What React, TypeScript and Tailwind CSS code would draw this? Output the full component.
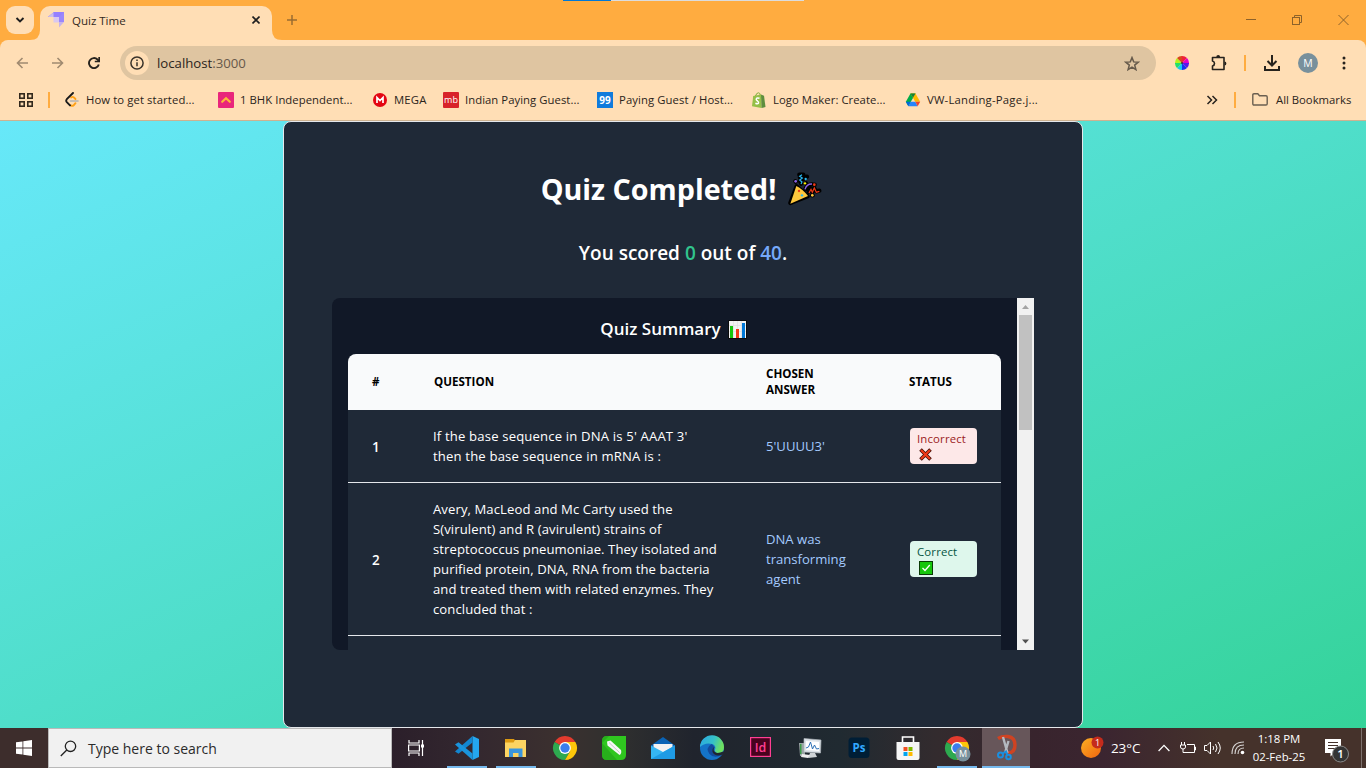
import React from "react";

type Kids = { children?: React.ReactNode };

/* ---------- emoji style drawings ---------- */

const Popper = () => (
  <svg className="ml-[11px] size-9 shrink-0" viewBox="801 65 108 108">
    <g stroke="#000" strokeWidth="13" strokeLinejoin="round" strokeLinecap="round" fill="#000">
      <path d="M811 161 830 111 863 141Z" />
      <path d="M838 76l12 0-10 8 9 6-9 5 4 8M850 84l11-2M826 96l1 1M858 102l1 1" fill="none" />
      <path d="M856 120q6-16 22-15M866 127l6-9 5 10 6-11 6 9 9-2M876 138l2 0M883 106l1 0" fill="none" />
    </g>
    <path d="M811 163 829 110q19 9 35 30Z" fill="#ffc83d" />
    <path d="M846 76l-7 5 8 5-8 6 7 6-3 6" fill="none" stroke="#28b8f2" strokeWidth="3.5" />
    <path d="M867 131l6-11 4 9 6-13 6 13 9-3" fill="none" stroke="#f03a17" strokeWidth="3.5" />
    <path d="M855 120q5-17 21-16" fill="none" stroke="#8a63e8" strokeWidth="4" />
    <circle cx="827" cy="96" r="4" fill="#8a63e8" />
    <circle cx="857" cy="89" r="3.5" fill="#28b8f2" />
    <circle cx="855" cy="102" r="3.5" fill="#fff100" />
    <circle cx="883" cy="106" r="4" fill="#f03a17" />
    <circle cx="877" cy="138" r="4" fill="#ffc83d" />
    <circle cx="837" cy="125" r="3.5" fill="#f03a17" />
    <circle cx="846" cy="138" r="3.5" fill="#28b8f2" />
  </svg>
);

const Chart = () => (
  <svg className="ml-[7px] size-[19px] shrink-0" viewBox="0 0 19 19">
    <rect width="19" height="19" rx="1" fill="#0b0b0b" />
    <rect x="1" y="1" width="17" height="17" fill="#f2f2f2" />
    <path d="M5.500 1v17M9.500 1v17M13.500 1v17M1 5.500h17M1 11.500h17" stroke="#dcdcdc" strokeWidth=".6" />
    <rect x="2" y="6" width="3" height="12" fill="#16c60c" />
    <rect x="8" y="9" width="3" height="9" fill="#f03a17" />
    <rect x="14" y="3" width="3" height="15" fill="#0078d7" />
  </svg>
);

const Cross = () => (
  <svg className="ml-[2px] size-[13px]" viewBox="0 0 13 13">
    <path d="M1.500 1.500 11.500 11.500M11.500 1.500 1.500 11.500" stroke="#3b0d05" strokeWidth="3.600" />
    <path d="M2 2 11 11M11 2 2 11" stroke="#f03a17" strokeWidth="2.200" />
  </svg>
);

const Check = () => (
  <svg className="mt-px ml-[2px] size-[14px]" viewBox="0 0 14 14">
    <rect width="14" height="14" fill="#0a3d06" />
    <rect x="1" y="1" width="12" height="12" fill="#16c60c" />
    <path d="M3.500 7 6 9.500 10.800 4" fill="none" stroke="#fff" strokeWidth="1.300" />
  </svg>
);

/* ---------- browser chrome ---------- */

function TabStrip() {
  return (
    <div className="relative flex h-10 shrink-0 items-start bg-[#ffac40]">
      <div className="absolute top-0 left-[563px] flex h-px w-[241px] bg-[#dcdcdc]">
        <div className="w-12 bg-[#0078d7]" />
      </div>
      <div className="mt-1.5 ml-1.5 flex size-7 items-center justify-center rounded-[9px] bg-[#ffdeb5]">
        <svg width="10" height="8" viewBox="0 0 10 8">
          <path d="M1.500 2 5 5.500 8.500 2" fill="none" stroke="#1f1f1f" strokeWidth="1.900" />
        </svg>
      </div>
      <div className="relative mt-1.5 ml-1.5 flex h-[34px] w-[232px] rounded-t-[10px] bg-[#ffdeb5]">
        <svg className="absolute bottom-0 -left-2.5" width="10" height="10">
          <path d="M10 0v10H0Q10 10 10 0Z" fill="#ffdeb5" />
        </svg>
        <svg className="absolute -right-2.5 bottom-0" width="10" height="10">
          <path d="M0 0v10h10Q0 10 0 0Z" fill="#ffdeb5" />
        </svg>
        <svg className="mt-1.5 ml-2 size-4" viewBox="0 0 16 16">
          <path d="M6 0h10v10h-5V5H0Z" fill="#9b87fb" />
          <path d="M6 0h10L11 5H0Z" fill="#9580ff" />
          <path d="M0 5 5.500.500V5Z" fill="#cdbfe8" />
          <rect x="5.500" y="5" width="5.500" height="5.500" fill="#d9c8f0" />
          <path d="M11 10h5l-5 5.500Z" fill="#c7b3ea" />
        </svg>
        <span className="mt-[7px] ml-2 text-[11.5px] leading-4 text-[#33291d]">Quiz Time</span>
        <svg className="mt-[10px] mr-3 ml-auto" width="8" height="8">
          <path d="M.5.5l7 7M7.500.5l-7 7" stroke="#1f1f1f" strokeWidth="1.600" />
        </svg>
      </div>
      <svg className="mt-[15px] ml-[15px]" width="10" height="10">
        <path d="M5 0v10M0 5h10" stroke="#9a6c30" strokeWidth="1.500" />
      </svg>
      <div className="mt-[14px] mr-[17px] ml-auto flex gap-[36px] text-[#8d622a]">
        <svg width="10" height="12"><path d="M0 5.500h10" stroke="currentColor" /></svg>
        <svg width="10" height="12" fill="none" stroke="currentColor">
          <rect x=".5" y="3.500" width="7" height="7" />
          <path d="M2.500 3.500v-2h7v7h-2" />
        </svg>
        <svg width="11" height="12"><path d="M.5 1l10 10M10.500 1l-10 10" stroke="currentColor" /></svg>
      </div>
    </div>
  );
}

function Toolbar() {
  return (
    <div className="bg-[#ffac40]">
      <div className="flex h-[46px] items-center rounded-t-lg bg-[#ffdeb5]">
        <svg className="ml-4" width="12" height="12" fill="none" stroke="#a08a70" strokeWidth="1.600">
          <path d="M12 6H1.500M6.500 1l-5 5 5 5" />
        </svg>
        <svg className="ml-6" width="12" height="12" fill="none" stroke="#a08a70" strokeWidth="1.600">
          <path d="M0 6h10.500M5.500 1l5 5-5 5" />
        </svg>
        <svg className="ml-6" width="12" height="14" fill="none" stroke="#26221d" strokeWidth="1.900">
          <path d="M10.800 8.500A5 5 0 1 1 9.500 3.500L11 5" />
          <path d="M11.200 1v4.500H6.800" strokeWidth="1.700" />
        </svg>
        <div className="ml-5 flex h-[34px] w-[1036px] items-center rounded-full bg-[#dfc5a1]">
          <div className="ml-[5px] flex size-6 items-center justify-center rounded-full bg-[#ffdeb5]">
            <svg width="14" height="14" fill="none" stroke="#3a332b" strokeWidth="1.500">
              <circle cx="7" cy="7" r="6.100" />
              <path d="M7 6.200v4M7 3.500v1.500" />
            </svg>
          </div>
          <span className="ml-2 text-[13.2px] leading-5 text-[#2b241b]">
            localhost<span className="text-[#67594a]">:3000</span>
          </span>
          <svg className="mr-4 ml-auto" width="16" height="15" viewBox="0 0 16 15" fill="none" stroke="#665a4b" strokeWidth="1.500">
            <path d="M8 1.600 9.700 5.900l4.500.3-3.500 2.900 1.200 4.500L8 11.100l-3.900 2.500 1.200-4.500L1.800 6.200l4.500-.3Z" />
          </svg>
        </div>
        <svg className="ml-[19px]" width="14" height="14" viewBox="-7 -7 14 14">
          <path d="M0 0V-7A7 7 0 0 1 5-5Z" fill="#f0203a" />
          <path d="M0 0 5-5A7 7 0 0 1 7 0Z" fill="#e000c8" />
          <path d="M0 0H7A7 7 0 0 1 5 5Z" fill="#5a16e8" />
          <path d="M0 0 5 5A7 7 0 0 1 0 7Z" fill="#1730f2" />
          <path d="M0 0V7A7 7 0 0 1-5 5Z" fill="#16c8ee" />
          <path d="M0 0-5 5A7 7 0 0 1-7 0Z" fill="#22e06a" />
          <path d="M0 0H-7A7 7 0 0 1-5-5Z" fill="#b6f01c" />
          <path d="M0 0-5-5A7 7 0 0 1 0-7Z" fill="#d8471c" />
          <circle r="1" fill="#333" />
        </svg>
        <svg className="-mt-px ml-[21px]" width="18" height="18" viewBox="0 0 18 18">
          <path d="M2.500 3.500h11.500v12H2.500v-3.500q2-.5 2-2.500t-2-2.500Z" fill="none" stroke="#26221d" strokeWidth="1.600" strokeLinejoin="round" />
          <path d="M6.300 3a1.900 1.900 0 0 1 3.800 0ZM14.500 7.600a1.900 1.900 0 0 1 0 3.800Z" fill="#26221d" />
        </svg>
        <div className="ml-[16px] h-4 w-0.5 bg-[#ffac40]" />
        <svg className="ml-[18px]" width="16" height="16" fill="none" stroke="#26221d" strokeWidth="2">
          <path d="M8 0v10M3.500 6 8 10.500 12.500 6M1 11v4h14v-4" />
        </svg>
        <div className="ml-[18px] flex size-5 items-center justify-center rounded-full bg-[#78909c] pt-px text-[10.5px] text-white">M</div>
        <svg className="ml-[24px]" width="4" height="14" fill="#26221d">
          <circle cx="2" cy="2" r="1.500" /><circle cx="2" cy="7" r="1.500" /><circle cx="2" cy="12" r="1.500" />
        </svg>
      </div>
    </div>
  );
}

const icons: Record<string, React.ReactNode> = {
  leet: (
    <svg width="16" height="16" viewBox="0 0 16 16" fill="none" strokeLinecap="round">
      <path d="M11.500 11.200 9.700 13.200q-1.500 1.300-3 0" stroke="#ffa116" strokeWidth="1.900" />
      <path d="M7 5.500q1.500-1.200 3 0l1.500 1.500" stroke="#ffa116" strokeWidth="1.800" />
      <path d="M9 1 2.800 7.200q-1.200 1.600 0 3L6 13.400" stroke="#1a1a1a" strokeWidth="1.900" />
      <path d="M6.500 9h7.500" stroke="#b3b3b3" strokeWidth="1.600" />
    </svg>
  ),
  bhk: (
    <svg width="16" height="16">
      <rect width="16" height="16" rx="1" fill="#e9267b" />
      <path d="M4.200 9.800 8 6.200l3.800 3.600" fill="none" stroke="#fcb83a" strokeWidth="2.200" strokeLinecap="round" />
    </svg>
  ),
  mega: (
    <svg width="16" height="16">
      <circle cx="8" cy="8" r="7" fill="#e30613" />
      <path d="M5 11V5.500L8 8.500l3-3V11" fill="none" stroke="#fff" strokeWidth="1.700" />
    </svg>
  ),
  mb: <span className="flex size-4 items-center justify-center rounded-[1px] bg-[#d8232a] text-[9px] leading-4 text-white">mb</span>,
  nn: <span className="flex size-4 items-center justify-center bg-[#0f7bdc] text-[10px] leading-4 font-bold text-white">99</span>,
  shop: (
    <svg width="16" height="16" viewBox="0 0 16 16">
      <path d="M2.200 4 10 2.500l.5 13.500L1 14.300Z" fill="#95bf47" />
      <path d="M10 2.500l3 1.200 1.500 11.300-4 1Z" fill="#5e8e3e" />
      <path d="M4.500 4Q5.500.700 7.500.800q1.700.2 1.700 2.200" fill="none" stroke="#7fae3b" />
      <path d="M8.500 6.300q-3-1-3.300 1 0 1 1.400 1.700 1.500 1 .8 2.300-.8 1-3 0" fill="none" stroke="#fff" strokeWidth="1.500" />
    </svg>
  ),
  drive: (
    <svg width="16" height="16" viewBox="0 0 16 16">
      <path d="M5.500 1.500h5L8 6 3.300 14 .8 9.800Z" fill="#00ac47" />
      <path d="M10.500 1.500 15.200 9.800h-5L5.500 1.500h5L8 5.800Z" fill="#ffba00" />
      <path d="M5.500 1.500 8 5.800l2.500-4.300Z" fill="#188038" />
      <path d="M5.700 9.800h4.600l2.400 4.500H3.300Z" fill="#2684fc" />
      <path d="M.8 9.800h4.900l-2.400 4.500Z" fill="#0066da" />
      <path d="M10.300 9.800h4.900l-2.500 4.500Z" fill="#ea4335" />
    </svg>
  ),
};

const bookmarks = [
  { icon: "leet", label: "How to get started...", w: "w-[154px] tracking-[0.1px]" },
  { icon: "bhk", label: "1 BHK Independent...", w: "w-[154px] tracking-[0.05px]" },
  { icon: "mega", label: "MEGA", w: "w-[71px] tracking-[0.2px]" },
  { icon: "mb", label: "Indian Paying Guest...", w: "w-[154px] tracking-[0.05px]" },
  { icon: "nn", label: "Paying Guest / Host...", w: "w-[154px] tracking-[0.1px]" },
  { icon: "shop", label: "Logo Maker: Create...", w: "w-[154px] tracking-[0.05px]" },
  { icon: "drive", label: "VW-Landing-Page.j...", w: "w-[140px] tracking-[0.22px]" },
];

function Bookmarks() {
  return (
    <div className="flex h-[35px] items-center border-b border-[#cdb291] bg-[#ffdeb5] pb-[7px] text-[11.3px] text-[#2b241b]">
      <svg className="ml-[19px] mt-[1px]" width="14" height="14" fill="none" stroke="#33291d" strokeWidth="1.600">
        <rect x=".8" y=".8" width="4.400" height="4.400" /><rect x="8.800" y=".8" width="4.400" height="4.400" />
        <rect x=".8" y="8.800" width="4.400" height="4.400" /><rect x="8.800" y="8.800" width="4.400" height="4.400" />
      </svg>
      <div className="ml-[15px] h-4 w-0.5 bg-[#ffac40]" />
      <div className="ml-[14px] flex">
        {bookmarks.map((b) => (
          <div key={b.label} className={`flex items-center gap-1.5 whitespace-nowrap ${b.w}`}>
            {icons[b.icon]}
            <span className="pt-px">{b.label}</span>
          </div>
        ))}
      </div>
      <svg className="ml-auto" width="12" height="10" fill="none" stroke="#26221d" strokeWidth="1.500">
        <path d="M1.500 1l4 4-4 4M6.500 1l4 4-4 4" />
      </svg>
      <div className="ml-4 h-4 w-0.5 bg-[#ffac40]" />
      <svg className="ml-4" width="16" height="13" fill="none" stroke="#6b5f50" strokeWidth="1.400">
        <path d="M.8 2q0-1.200 1.200-1.200h3.800l1.700 2H14q1.200 0 1.200 1.200v6.800q0 1.200-1.200 1.200H2q-1.200 0-1.200-1.200Z" />
      </svg>
      <span className="mr-[14px] ml-2 w-[76px] pt-px whitespace-nowrap">All Bookmarks</span>
    </div>
  );
}

/* ---------- quiz page ---------- */

const rows = [
  {
    lines: ["If the base sequence in DNA is 5' AAAT 3'", "then the base sequence in mRNA is :"],
    answer: ["5'UUUU3'"],
    ok: false,
    h: "h-[73px]",
    track: "tracking-[0.17px]",
  },
  {
    lines: [
      "Avery, MacLeod and Mc Carty used the",
      "S(virulent) and R (avirulent) strains of",
      "streptococcus pneumoniae. They isolated and",
      "purified protein, DNA, RNA from the bacteria",
      "and treated them with related enzymes. They",
      "concluded that :",
    ],
    answer: ["DNA was", "transforming", "agent"],
    ok: true,
    h: "h-[153px]",
    track: "tracking-[0.09px]",
  },
];

const Lines = ({ items }: { items: string[] }) => (
  <div className="leading-5 whitespace-nowrap">
    {items.map((t) => (
      <div key={t}>{t}</div>
    ))}
  </div>
);

const Cell = ({ children }: Kids) => <div className="pl-6">{children}</div>;

function Summary() {
  return (
    <div className="flex h-[352px] w-[702px] shrink-0 overflow-hidden rounded-l-lg bg-[#111827]">
      <div className="flex flex-1 flex-col px-4 pt-4">
        <h3 className="mb-3 flex h-7 shrink-0 items-center justify-center pt-0.5 pr-0.5 text-[17px] font-semibold">
          Quiz Summary
          <Chart />
        </h3>
        <div className="flex-1 overflow-hidden rounded-t-lg bg-[#1f2937] text-[13.1px]">
          <div className="grid h-14 grid-cols-[61px_333px_143px_116px] items-center bg-[#f9fafb] text-[11.6px] leading-4 font-bold text-black">
            <Cell>#</Cell>
            <Cell><span className="pl-px">QUESTION</span></Cell>
            <Cell>CHOSEN<br />ANSWER</Cell>
            <Cell>STATUS</Cell>
          </div>
          {rows.map((r, i) => (
            <div key={i} className={`grid grid-cols-[61px_333px_143px_116px] items-center border-b border-[#e5e7eb] ${r.h}`}>
              <Cell><div className="pt-px text-[13.5px] leading-5 font-semibold">{i + 1}</div></Cell>
              <Cell><div className={r.track}><Lines items={r.lines} /></div></Cell>
              <Cell><div className="text-[#a4cafe]"><Lines items={r.answer} /></div></Cell>
              <div className={`ml-[25px] h-9 w-[67px] rounded pt-[3px] pl-[7px] text-[11.4px] leading-4 font-medium tracking-[0.15px] ${r.ok ? "bg-[#def7ec] text-[#03543f]" : "bg-[#fde8e8] text-[#9b1c1c]"}`}>
                {r.ok ? "Correct" : "Incorrect"}
                {r.ok ? <Check /> : <div className="pt-px"><Cross /></div>}
              </div>
            </div>
          ))}
        </div>
      </div>
      <div className="flex w-[17px] flex-col items-center justify-between bg-[#f1f1f1]">
        <div className="flex h-[132px] flex-col items-center">
          <svg className="h-[17px] w-[17px] shrink-0" viewBox="0 0 17 17"><path d="M5 11 8.500 7 12 11Z" fill="#a3a3a3" /></svg>
          <div className="w-[13px] flex-1 bg-[#c1c1c1]" />
        </div>
        <svg width="17" height="17" viewBox="0 0 17 17"><path d="M5 6.500h7L8.500 10.500Z" fill="#505050" /></svg>
      </div>
    </div>
  );
}

function Page() {
  return (
    <div className="flex h-[607px] shrink-0 justify-center bg-linear-to-br from-[#67e8f9] to-[#34d399]">
      <div className="flex h-[607px] w-[800px] flex-col items-center rounded-lg border border-[#e5e7eb] bg-[#1f2937] pt-[49px] text-white">
        <h1 className="-ml-0.5 flex h-9 items-center text-[28.7px] font-bold whitespace-nowrap">
          Quiz Completed!
          <Popper />
        </h1>
        <p className="mt-8 mb-[31px] h-7 text-[19px] leading-7 font-semibold whitespace-nowrap">
          You scored <span className="text-[#31c48d]">0</span> out of <span className="text-[#76a9fa]">40</span>.
        </p>
        <Summary />
      </div>
    </div>
  );
}

/* ---------- taskbar ---------- */

const ChromeLogo = () => (
  <>
    <path d="M12 12 1.600 6A12 12 0 0 1 22.400 6H12Z" fill="#e33b2e" />
    <path d="M12 12 1.600 6A12 12 0 0 0 12 24l5.200-9Z" fill="#2da94f" />
    <path d="M12 12V6h10.400A12 12 0 0 1 12 24l5.200-9Z" fill="#fdc60a" />
    <circle cx="12" cy="12" r="5.900" fill="#fff" />
    <circle cx="12" cy="12" r="4.700" fill="#3b7ded" />
  </>
);

const TaskIcon = ({ children, line, active }: Kids & { line?: boolean; active?: boolean }) => (
  <div className={`flex w-12 flex-col items-center pt-2 ${active ? "bg-[#67565a]" : ""}`}>
    <svg width="24" height="24" viewBox="0 0 24 24" overflow="visible" className="shrink-0">{children}</svg>
    {line && <div className={`mt-auto h-0.5 bg-[#76b9ed] ${active ? "w-12" : "w-10"}`} />}
  </div>
);

function Taskbar() {
  return (
    <div className="flex h-10 shrink-0 bg-[#3d2d2c] text-white">
      <div className="flex w-12 items-center justify-center">
        <svg width="16" height="16" fill="#fff">
          <path d="M0 2.300 6.500 1.400V7.500H0ZM7.300 1.300 16 0V7.500H7.300ZM0 8.400H6.500V14.600L0 13.700ZM7.300 8.400H16V16L7.300 14.800Z" />
        </svg>
      </div>
      <div className="flex w-[344px] items-center border border-[#b9b9b9] bg-[#f1f1f1] text-[14px] text-[#2b2b2b]">
        <svg className="ml-[11px]" width="17" height="17" fill="none" stroke="#222" strokeWidth="1.300">
          <circle cx="10.500" cy="6.300" r="5.200" /><path d="M6.800 10 .8 16" />
        </svg>
        <span className="ml-[11px]">Type here to search</span>
      </div>
      <div className="flex flex-1 bg-[linear-gradient(90deg,#2b1f2a_0%,#33272f_8%,#3b302f_17%,#30302f_23%,#20242d_31%,#202a31_46%,#332b2e_56%,#38242d_66%,#3b2530_73%,#45322b_85%,#45322b_100%)]">
        <div className="mr-[3px] flex w-12 items-center justify-center">
          <svg width="17" height="16" fill="none" stroke="#fff" strokeWidth="1.200">
            <path d="M1 0v3h10V0M1 16v-3h10v3M.6 5h10.800v6H.6ZM14.500 0v16" />
            <rect x="13" y="4.500" width="3" height="3" fill="#fff" stroke="none" />
          </svg>
        </div>
        <div className="flex gap-px">
          <TaskIcon line>
            <path d="M17.500 0 24 3V21L17.500 24Z" fill="#24a6ee" />
            <path d="M17.500 0V6.500L3.500 17.800 0 15.500Z" fill="#1286d0" />
            <path d="M0 8.500 3.500 6.200 17.500 17.500V24Z" fill="#1a94dc" />
          </TaskIcon>
          <TaskIcon line>
            <path d="M1 3h9l1.500 2H22v6H1Z" fill="#dd9a11" />
            <path d="M1 6.500h8.500L11 4h11v17H1Z" fill="#fcd462" />
            <path d="M5 21v-8.500h13.500V21h-4v-4h-5.500v4Z" fill="#3a96dd" />
          </TaskIcon>
          <TaskIcon><ChromeLogo /></TaskIcon>
          <TaskIcon>
            <path d="M5 0h19v19q0 5-5 5H5q-5 0-5-5V5q0-5 5-5Z" fill="#2fc61f" />
            <path d="M0 7 7 0v0H5Q0 0 0 5V19q0 5 5 5H15Z" fill="#23a51a" opacity=".7" />
            <path d="M5 5.500 8.500 4.500 19 14q1 3.500-1.500 5L5.500 9.500Z" fill="#f7f7f7" />
            <path d="M7 6.500 17.500 16.500" stroke="#c8c8c8" strokeWidth="1" />
          </TaskIcon>
          <TaskIcon>
            <path d="M0 9.500 12 1 24 9.500V12H0Z" fill="#0a63b5" />
            <path d="M2.500 8H21.500v8H2.500Z" fill="#f2f2f2" />
            <path d="M0 9.500 12 16 24 9.500V23H0Z" fill="#35b5f2" />
            <path d="M24 9.500V23H0Z" fill="#1f9be4" />
          </TaskIcon>
          <TaskIcon>
            <defs>
              <linearGradient id="edge" x1="0" y1="0" x2="1" y2=".3">
                <stop offset="0" stopColor="#2aa6e4" /><stop offset=".6" stopColor="#35c1c8" /><stop offset="1" stopColor="#6ee060" />
              </linearGradient>
            </defs>
            <circle cx="12" cy="12" r="12" fill="#1473c8" />
            <path d="M0 11A12 12 0 0 1 24 11.500q0 5.500-6 5.500-4 0-3.500-2.500 2.500-4.500-2-6.500Q5 6 0 11Z" fill="url(#edge)" />
            <path d="M11.500 8Q5 12 9.500 18q4.500 5 12.500 1-5-.5-7-3.500-2-2.500-.5-4-1-2.500-3-3.500Z" fill="#124a9c" />
            <path d="M14.500 11q-2 2.500 0 5 3 2 9-.5l.5 1.500-2.500 2q-7 1.500-9-3-.5-4 2-5Z" fill="#20262f" />
          </TaskIcon>
          <TaskIcon>
            <rect x="1.600" y="1.600" width="19.800" height="18.800" fill="#49021f" stroke="#ff3f93" strokeWidth="1.200" />
            <text x="11.500" y="15.800" textAnchor="middle" fontSize="12.500" fontWeight="600" fill="#ff3f93" fontFamily="Open Sans">Id</text>
          </TaskIcon>
          <TaskIcon>
            <path d="M1 7h6v13H2Z" fill="#9ba5a5" />
            <path d="M2 8h1.500v10H2Z" fill="#3a9d49" />
            <path d="M6 2.500 23 4l-.5 13L6 16Z" fill="#dfe5ea" stroke="#aab2b8" strokeWidth=".7" />
            <path d="M8 5 21 6v9L8 14Z" fill="#fff" />
            <path d="M8 12l2.500-1 2-5 2 7 2-4 2 4 2.500-.5" fill="none" stroke="#2b6fb5" />
            <path d="M12 17h5l2 4-9 1Z" fill="#cfd4d7" /><path d="M4 18l8 1-2 3-7-1Z" fill="#eee" />
          </TaskIcon>
          <TaskIcon>
            <rect x="1.500" y="1.500" width="21" height="20.500" rx="3.500" fill="#001e36" />
            <text x="12" y="16" textAnchor="middle" fontSize="11.500" fontWeight="700" fill="#31a8ff" fontFamily="Open Sans">Ps</text>
          </TaskIcon>
          <TaskIcon>
            <path d="M6.500 7V1h11v6" fill="none" stroke="#fff" strokeWidth="1.600" />
            <path d="M.5 6h23v16q0 2-2 2h-19q-2 0-2-2Z" fill="#f6f6f6" />
            <rect x="7.500" y="11" width="4" height="4" fill="#f25022" /><rect x="12.500" y="11" width="4" height="4" fill="#7fba00" />
            <rect x="7.500" y="16" width="4" height="4" fill="#00a4ef" /><rect x="12.500" y="16" width="4" height="4" fill="#ffb900" />
          </TaskIcon>
          <TaskIcon line>
            <ChromeLogo />
            <circle cx="18" cy="18" r="7.500" fill="#78909c" />
            <text x="18" y="21.300" textAnchor="middle" fontSize="9" fill="#fff" fontFamily="Open Sans">M</text>
          </TaskIcon>
          <TaskIcon line active>
            <path d="M4 2.500Q8 0 14 .5q7 1 7 8.500 0 7-6 8-2 0-3-2" fill="none" stroke="#cf4322" strokeWidth="3.400" />
            <path d="M9 1 13.500 17M14.500 5 11 17" stroke="#b3b8bf" strokeWidth="2.400" />
            <circle cx="6.500" cy="19" r="2.500" fill="none" stroke="#1a8fe0" strokeWidth="2" />
            <circle cx="14.500" cy="21" r="2.300" fill="none" stroke="#1a8fe0" strokeWidth="2" />
            <path d="M8.500 17.500 12 15.500l1.500 3.500" fill="none" stroke="#1a8fe0" strokeWidth="2" />
          </TaskIcon>
        </div>
        <div className="ml-[50px] flex flex-1 items-center">
          <svg width="24" height="24" viewBox="0 0 24 24">
            <defs><linearGradient id="sun" x1="0" y1="0" x2="1" y2="1"><stop offset="0" stopColor="#fbb024" /><stop offset="1" stopColor="#f0640f" /></linearGradient></defs>
            <circle cx="11" cy="12" r="10" fill="url(#sun)" />
            <circle cx="17.500" cy="6.500" r="6" fill="#c42b1c" />
            <text x="17.500" y="9.700" textAnchor="middle" fontSize="9" fill="#fff" fontFamily="Open Sans">1</text>
          </svg>
          <span className="ml-[7px] w-[30px] text-[13.5px] tracking-[-0.1px] whitespace-nowrap">23°C</span>
          <svg className="ml-[17px]" width="12" height="8" fill="none" stroke="#fff" strokeWidth="1.300"><path d="M.6 7 6 1.400 11.400 7" /></svg>
          <svg className="ml-[10px]" width="16" height="13" fill="none" stroke="#fff">
            <path d="M7 2.500h7.500v8h-9M14.500 5h1v3h-1M1.500 0v3M4.500 0v3M.5 3h5v2q0 2-2.500 2T.5 5ZM3 7v3.500h3" />
          </svg>
          <svg className="ml-2" width="17" height="14" fill="none" stroke="#fff">
            <path d="M.5 4.500h2.500L6.500 1v12L3 9.500H.5ZM9 5q1.500 2 0 4M11.500 3q3 4 0 8M14 1q4.500 6 0 12" />
          </svg>
          <svg className="ml-[10px]" width="14" height="14" fill="none" stroke="#eee" strokeWidth="1.100">
            <path d="M1 13Q1 1 13 1M4 13q0-9 9-9M7 13q0-6 6-6" opacity=".85" /><circle cx="11.500" cy="11.500" r="1.800" fill="#fff" stroke="none" />
          </svg>
          <div className="ml-[6px] flex w-[56px] flex-col items-center text-[11.4px] leading-[18px] whitespace-nowrap">
            <span>1:18 PM</span>
            <span>02-Feb-25</span>
          </div>
          <svg className="mt-1 ml-[18px]" width="26" height="28" viewBox="0 0 26 28">
            <path d="M0 3h16v14h-7l-3.500 3.500V17H0Z" fill="#fff" />
            <path d="M3 6.500h10M3 9.500h10M3 12.500h7" stroke="#45322b" strokeWidth="1.100" />
            <circle cx="15.500" cy="18" r="8" fill="#343434" stroke="#8a8a8a" />
            <text x="15.500" y="22" textAnchor="middle" fontSize="11.500" fontWeight="600" fill="#fff" fontFamily="Open Sans">1</text>
          </svg>
          <div className="mr-1 ml-auto h-full w-px bg-[#7d716d]" />
        </div>
      </div>
    </div>
  );
}

export default function App() {
  return (
    <div className="flex h-[768px] w-[1366px] flex-col overflow-hidden font-['Open_Sans',sans-serif]">
      <TabStrip />
      <Toolbar />
      <Bookmarks />
      <Page />
      <Taskbar />
    </div>
  );
}
